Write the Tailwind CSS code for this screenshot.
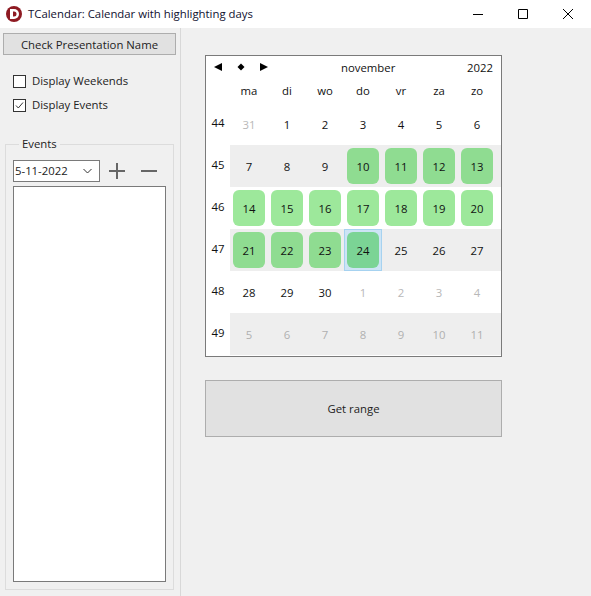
<!DOCTYPE html>
<html>
<head>
<meta charset="utf-8">
<script src="https://cdn.jsdelivr.net/npm/@tailwindcss/browser@4"></script>
</head>
<body class="w-[591px] h-[596px] overflow-hidden bg-[#f0f0f0] text-[11.35px] leading-[16px] text-black font-['Open_Sans','Noto_Sans',sans-serif]">
<div class="flex h-[28px] items-center bg-white">
  <svg class="ml-[6px] h-[16px] w-[16px]" viewBox="0 0 16 16"><circle cx="8" cy="8" r="8" fill="#8e1a22"/><path d="M4 3h4a5 5 0 0 1 0 10H4z" fill="#fff"/><path d="M7 5.5h1a2.5 2.5 0 0 1 0 5H7z" fill="#8e1a22"/></svg>
  <div class="ml-[6px] text-[#101030]">TCalendar: Calendar with highlighting days</div>
  <div class="ml-auto flex h-full items-center">
    <svg class="h-[12px] w-[12px] mr-[33px]" viewBox="0 0 12 12"><path d="M1 6.5h10" stroke="#000" fill="none"/></svg>
    <svg class="h-[12px] w-[12px] mr-[33px]" viewBox="0 0 12 12"><path d="M1.5 1.5h9v9h-9z" stroke="#000" fill="none"/></svg>
    <svg class="h-[12px] w-[12px] mr-[17px]" viewBox="0 0 12 12"><path d="M1 1l10 10M11 1L1 11" stroke="#000" fill="none"/></svg>
  </div>
</div>
<div class="flex h-[568px]">
  <aside class="relative w-[181px] shrink-0 border-r border-[#d8d8d8] px-[3px] pt-[5px]">
    <button class="block h-[22px] w-[173px] border border-[#adadad] bg-[#e1e1e1] pt-[1px] text-center text-[#222]">Check Presentation Name</button>
    <label class="ml-[10px] mt-[18px] flex h-[16px] items-center gap-[6px]"><span class="h-[13px] w-[13px] border border-[#333] bg-white"></span><span class="text-[#222]">Display Weekends</span></label>
    <label class="ml-[10px] mt-[8px] flex h-[16px] items-center gap-[6px]"><span class="h-[13px] w-[13px] border border-[#333] bg-white"><svg class="h-[11px] w-[11px]" viewBox="0 0 11 11"><path d="M2 5.5l2.3 2.5L9 2.5" stroke="#333" fill="none"/></svg></span><span class="text-[#222]">Display Events</span></label>
    <fieldset class="ml-[2px] mt-[23px] h-[454px] w-[169px] border border-[#dcdcdc] px-[7px] pb-[7px]">
      <legend class="ml-[6px] px-[3px] text-[#222]">Events</legend>
      <div class="mt-[8px] flex h-[22px] items-center">
        <div class="flex h-[22px] w-[87px] items-center justify-between border border-[#7a7a7a] bg-white pl-[1px] pr-[7px]"><span class="text-[#222]">5-11-2022</span><svg class="h-[6px] w-[9px]" viewBox="0 0 9 6"><path d="M.5 1l4 4 4-4" stroke="#333" fill="none"/></svg></div>
        <svg class="ml-[9px] h-[16px] w-[16px]" viewBox="0 0 16 16"><path d="M0 8h16M8 0v16" stroke="#666" stroke-width="2" fill="none"/></svg>
        <svg class="ml-[16px] h-[16px] w-[16px]" viewBox="0 0 16 16"><path d="M0 8h16" stroke="#666" stroke-width="2" fill="none"/></svg>
      </div>
      <div class="mt-[4px] h-[396px] w-[153px] border border-[#7a7a7a] bg-white"></div>
    </fieldset>
  </aside>
  <main class="ml-[24px] w-[297px] pt-[27px]">
    <div class="h-[302px] w-[297px] border border-[#7a7a7a] bg-white text-[#111]">
      <div class="flex h-[22px] items-center">
        <div class="ml-[8px] flex items-center">
          <svg class="h-[8px] w-[8px]" viewBox="0 0 8 8"><path d="M0 4l8-4v8z" fill="#000"/></svg>
          <svg class="ml-[15px] h-[8px] w-[8px]" viewBox="0 0 8 8"><path d="M4 .5L7.5 4 4 7.5.5 4z" fill="#000"/></svg>
          <svg class="ml-[15px] h-[8px] w-[8px]" viewBox="0 0 8 8"><path d="M8 4L0 0v8z" fill="#000"/></svg>
        </div>
        <span class="ml-[73px] pt-[2px]">november</span>
        <span class="ml-auto mr-[8px] pt-[2px]">2022</span>
      </div>
      <div class="grid h-[25px] grid-cols-[24px_repeat(7,38px)] items-center text-center">
        <span></span><span>ma</span><span>di</span><span>wo</span><span>do</span><span>vr</span><span>za</span><span>zo</span>
      </div>
      <div class="grid h-[42px] grid-cols-[24px_repeat(7,38px)_1fr] text-center"><span class="pt-[12px]">44</span><span class="pt-[14px] text-[#b8b8b8]">31</span><span class="pt-[14px]">1</span><span class="pt-[14px]">2</span><span class="pt-[14px]">3</span><span class="pt-[14px]">4</span><span class="pt-[14px]">5</span><span class="pt-[14px]">6</span></div>
      <div class="grid h-[42px] grid-cols-[24px_repeat(7,38px)_1fr] text-center"><span class="bg-white pt-[12px]">45</span><span class="bg-[#eeeeee] pt-[14px]">7</span><span class="bg-[#eeeeee] pt-[14px]">8</span><span class="bg-[#eeeeee] pt-[14px]">9</span><span class="bg-[#eeeeee] p-[3px]"><span class="block h-[36px] rounded-[6px] bg-[#8fdc91] pt-[11px]">10</span></span><span class="bg-[#eeeeee] p-[3px]"><span class="block h-[36px] rounded-[6px] bg-[#8fdc91] pt-[11px]">11</span></span><span class="bg-[#eeeeee] p-[3px]"><span class="block h-[36px] rounded-[6px] bg-[#8fdc91] pt-[11px]">12</span></span><span class="bg-[#eeeeee] p-[3px]"><span class="block h-[36px] rounded-[6px] bg-[#8fdc91] pt-[11px]">13</span></span><span class="bg-[#eeeeee]"></span></div>
      <div class="grid h-[42px] grid-cols-[24px_repeat(7,38px)_1fr] text-center"><span class="pt-[12px]">46</span><span class="p-[3px]"><span class="block h-[36px] rounded-[6px] bg-[#9de89b] pt-[11px]">14</span></span><span class="p-[3px]"><span class="block h-[36px] rounded-[6px] bg-[#9de89b] pt-[11px]">15</span></span><span class="p-[3px]"><span class="block h-[36px] rounded-[6px] bg-[#9de89b] pt-[11px]">16</span></span><span class="p-[3px]"><span class="block h-[36px] rounded-[6px] bg-[#9de89b] pt-[11px]">17</span></span><span class="p-[3px]"><span class="block h-[36px] rounded-[6px] bg-[#9de89b] pt-[11px]">18</span></span><span class="p-[3px]"><span class="block h-[36px] rounded-[6px] bg-[#9de89b] pt-[11px]">19</span></span><span class="p-[3px]"><span class="block h-[36px] rounded-[6px] bg-[#9de89b] pt-[11px]">20</span></span></div>
      <div class="grid h-[42px] grid-cols-[24px_repeat(7,38px)_1fr] text-center"><span class="pt-[12px]">47</span><span class="bg-[#eeeeee] p-[3px]"><span class="block h-[36px] rounded-[6px] bg-[#8fdc91] pt-[11px]">21</span></span><span class="bg-[#eeeeee] p-[3px]"><span class="block h-[36px] rounded-[6px] bg-[#8fdc91] pt-[11px]">22</span></span><span class="bg-[#eeeeee] p-[3px]"><span class="block h-[36px] rounded-[6px] bg-[#8fdc91] pt-[11px]">23</span></span><span class="border border-[#a6d2f0] bg-[#cde4f5] p-[2px]"><span class="block h-[36px] rounded-[6px] bg-[#7bd495] pt-[11px]">24</span></span><span class="bg-[#eeeeee] pt-[14px]">25</span><span class="bg-[#eeeeee] pt-[14px]">26</span><span class="bg-[#eeeeee] pt-[14px]">27</span><span class="bg-[#eeeeee]"></span></div>
      <div class="grid h-[42px] grid-cols-[24px_repeat(7,38px)_1fr] text-center"><span class="pt-[12px]">48</span><span class="pt-[14px]">28</span><span class="pt-[14px]">29</span><span class="pt-[14px]">30</span><span class="pt-[14px] text-[#b8b8b8]">1</span><span class="pt-[14px] text-[#b8b8b8]">2</span><span class="pt-[14px] text-[#b8b8b8]">3</span><span class="pt-[14px] text-[#b8b8b8]">4</span></div>
      <div class="grid h-[42px] grid-cols-[24px_repeat(7,38px)_1fr] text-center"><span class="pt-[12px]">49</span><span class="bg-[#eeeeee] pt-[14px] text-[#b0b0b0]">5</span><span class="bg-[#eeeeee] pt-[14px] text-[#b0b0b0]">6</span><span class="bg-[#eeeeee] pt-[14px] text-[#b0b0b0]">7</span><span class="bg-[#eeeeee] pt-[14px] text-[#b0b0b0]">8</span><span class="bg-[#eeeeee] pt-[14px] text-[#b0b0b0]">9</span><span class="bg-[#eeeeee] pt-[14px] text-[#b0b0b0]">10</span><span class="bg-[#eeeeee] pt-[14px] text-[#b0b0b0]">11</span><span class="bg-[#eeeeee]"></span></div>
    </div>
    <button class="mt-[23px] block h-[57px] w-[297px] border border-[#adadad] bg-[#e1e1e1] text-center text-[#222]">Get range</button>
  </main>
</div>
</body>
</html>
